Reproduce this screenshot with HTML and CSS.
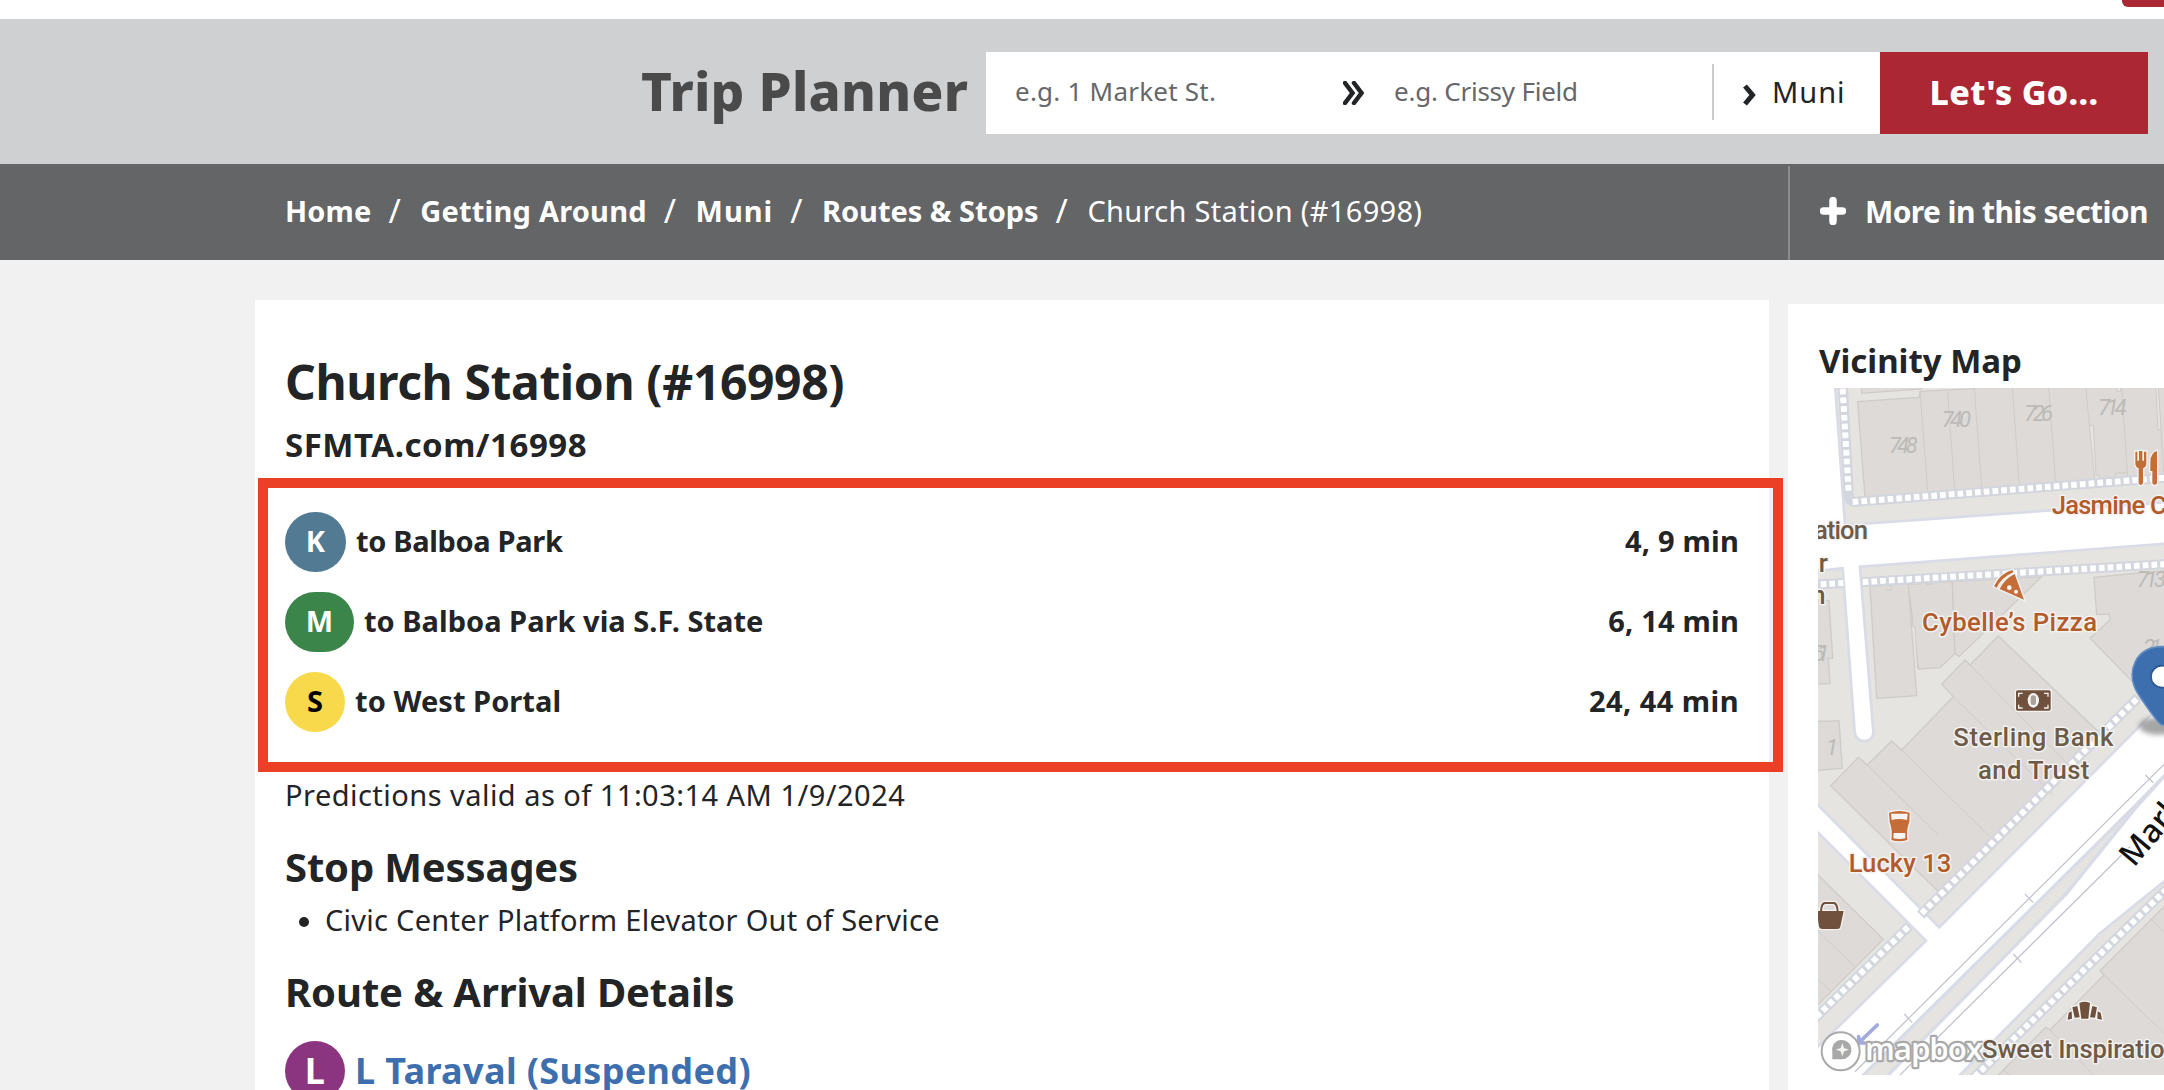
FILE: index.html
```
<!DOCTYPE html>
<html lang="en">
<head>
<meta charset="utf-8">
<title>Church Station (#16998)</title>
<link rel="stylesheet" href="styles.css">
</head>
<body>
<div class="topbar"><span class="topbar-tab"></span></div>
<header class="planner">
  <div class="planner-title">Trip Planner</div>
  <div class="planner-form">
    <span class="field from">e.g. 1 Market St.</span>
    <svg class="ico-double" viewBox="0 0 22 24"><path d="M2 2 L9.500 12 L2 22 M11 2 L18.500 12 L11 22" /></svg>
    <span class="field to">e.g. Crissy Field</span>
    <span class="mode"><svg class="ico-single" viewBox="0 0 14 22"><path d="M3 2 L10.500 11 L3 20" /></svg>Muni</span>
    <span class="go">Let's Go...</span>
  </div>
</header>
<nav class="crumbs">
  <div class="trail">
    <b class="c1">Home</b><i>/</i><b class="c2">Getting Around</b><i>/</i><b class="c3">Muni</b><i>/</i><b class="c4">Routes &amp; Stops</b><i>/</i><span>Church Station (#16998)</span>
  </div>
  <div class="more"><svg class="ico-plus" viewBox="0 0 26 28"><path d="M13 3.500 V24.500 M3.500 14 H22.500"/></svg>More in this section</div>
</nav>
<main class="page">
  <article class="stop">
    <h1>Church Station (#16998)</h1>
    <div class="short-url">SFMTA.com/16998</div>
    <section class="arrivals">
      <div class="row"><span class="badge k">K</span><span class="dest d1">to Balboa Park</span><span class="time t1">4, 9 min</span></div>
      <div class="row"><span class="badge m">M</span><span class="dest d2">to Balboa Park via S.F. State</span><span class="time t2">6, 14 min</span></div>
      <div class="row"><span class="badge s">S</span><span class="dest d3">to West Portal</span><span class="time t3">24, 44 min</span></div>
    </section>
    <p class="valid">Predictions valid as of 11:03:14 AM 1/9/2024</p>
    <h2 class="messages">Stop Messages</h2>
    <div class="message"><span class="dot"></span>Civic Center Platform Elevator Out of Service</div>
    <h2 class="details">Route &amp; Arrival Details</h2>
    <div class="route"><span class="badge l">L</span><span class="route-name">L Taraval (Suspended)</span></div>
  </article>
  <aside class="vicinity">
    <h3>Vicinity Map</h3>
    <svg class="map" viewBox="114 294 1038 2061">
      <defs><filter id="soft" x="-50%" y="-50%" width="200%" height="200%"><feGaussianBlur stdDeviation="8"/></filter></defs>
      <rect class="land" x="114" y="294" width="1038" height="2061"/>
      <!-- buildings -->
      <g class="bld">
        <path d="M245 280 H424 V297 L245 310Z"/>
        <path d="M233 335 L418 322 L420 304 L583 296 L583 280 H1170 V560 L255 622Z"/>
        <path d="M270 890 L385 880 L410 1217 L290 1225Z"/>
        <path d="M385 883 L517 875 L525 1090 L480 1133 L415 1137Z"/>
        <path d="M517 875 L785 860 L537 1100 L525 1090Z"/>
        <path d="M655 1038 L960 1330 L475 1805 L152 1487 L235 1402 L262 1425 L335 1353 L365 1380 L520 1220 L485 1183 L555 1110 L570 1125Z"/>
        <path d="M942 862 L1015 855 L1170 840 V1290 L930 1045 L990 990 L988 973 L950 973Z"/>
        <path d="M100 930 L147 932 L158 1105 L145 1105 L150 1180 L100 1183Z"/>
        <path d="M100 1295 L177 1292 L187 1435 L100 1442Z"/>
        <path d="M100 1741 L310 1948 L100 2158Z"/>
        <path d="M1170 1832 L960 2042 L972 2055 L810 2220 L797 2212 L640 2370 H1170Z"/>
      </g>
      <g class="split">
        <path d="M420 303 L443 603 M503 305 L524 600 M583 295 L605 592 M697 294 L718 585 M806 294 L827 577 M918 294 L928 407 M1025 294 L1043 562 M1134 294 L1152 560 M1005 550 L1040 548 M1005 565 V550 M318 893 V900 H334 V890 M438 883 L458 882"/>
        <path d="M570 1125 L880 1440 M520 1220 L820 1515 M365 1380 L640 1650 M262 1425 L475 1635 M114 1923 L222 2028 M114 2068 L152 2103 M972 2055 L1152 2230 M1110 1885 L1152 1927 M810 2220 L940 2355 M670 2340 L690 2355"/>
      </g>
      <path class="gap" d="M928 407 H940 L948 555 L958 558 L958 568 L944 568Z M1127 280 H1134 L1143 420 H1134Z M1008 280 L1012 305 L1022 303 L1020 280Z M397 1010 H405 L413 1135"/>
      <!-- roads -->
      <g class="road">
        <path d="M100 280 H165 L195 705 L1170 636 V760 L240 830 L280 1325 C282 1362 226 1364 224 1325 L188 835 L100 844Z"/>
        <path d="M1170 1217 L478 1912 L100 1531 V1614 L438 1952 L100 2284 V2370 H525 L960 1930 L1170 1760Z"/>
      </g>
      <path class="median" d="M1170 1440 L1065 1548 L235 2370 H310 L860 1810 L1065 1556 Z"/>
      <g class="walk-edge">
        <path d="M188 280 L207 620 Q208 637 228 635 L1160 563 M100 884 L190 879 M244 877 L1160 822 M1075 1222 L422 1875 M388 1908 L100 2190 M1160 1797 L580 2365"/>
      </g>
      <g class="walk">
        <path d="M188 296 L206 610 M218 636 L1160 563 M122 883 L190 879 M248 876 L1160 822 M1070 1227 L422 1873 M384 1911 L100 2190 M1160 1797 L580 2365"/>
      </g>
      <g class="rail"><path d="M1160 1415 L225 2345 M1050 1670 L350 2365"/><path d="M735 1812 L759 1838 M700 1992 L724 2018 M373 2172 L397 2198 M1096 1455 L1120 1478"/></g>
      <path class="arrow" d="M292 2205 L243 2252 M236 2240 V2259 H254"/>
      <!-- house numbers -->
      <g class="num">
        <text x="327" y="490" textLength="86">748</text><text x="485" y="412" textLength="88">740</text>
        <text x="733" y="393" textLength="86">726</text><text x="955" y="375" textLength="85">714</text>
        <text x="1070" y="890" textLength="88">713</text><text x="1090" y="1095" textLength="56">21</text>
        <text x="98" y="1114" textLength="50">51</text><text x="138" y="1395">1</text>
      </g>
      <!-- places -->
      <g class="poi food">
        <text x="815" y="672" textLength="345">Jasmine C</text>
        <text x="426" y="1023" textLength="525">Cybelle’s Pizza</text>
        <text x="206" y="1745" textLength="308">Lucky 13</text>
      </g>
      <g class="poi">
        <text x="102" y="747" textLength="162">ation</text><text x="116" y="847">r</text><text x="94" y="943">n</text>
        <text x="520" y="1368" textLength="480">Sterling Bank</text>
        <text x="594" y="1467" textLength="334">and Trust</text>
      </g>
      <text class="street" transform="translate(1062 1734) rotate(-50)">Mark</text>
      <g class="icon food-icon">
        <path d="M1066 485 H1072 V512 H1077 V483 H1087 V512 H1092 V485 H1099 V520 Q1099 532 1089 535 V580 Q1082 590 1076 580 V535 Q1066 532 1066 520Z M1131 483 V580 Q1124 589 1117 580 V543 H1111 V515 Q1112 488 1131 483Z"/>
        <path d="M642 889 Q660 850 697 840 L700 847 Q665 862 650 893Z M704 852 L732 929 L659 897 Q673 867 704 852Z"/>
        <path d="M327 1568 Q357 1558 389 1568 L388 1596 Q378 1620 382 1650 Q358 1658 334 1650 Q338 1620 329 1596Z"/>
      </g>
      <g class="hole"><circle cx="688" cy="893" r="7"/><circle cx="708" cy="905" r="6"/><path d="M333 1571 H383 L381 1590 Q357 1584 335 1590Z M341 1629 H376 V1645 Q358 1649 340 1645Z"/></g>
      <g class="icon">
        <rect x="708" y="1201" width="104" height="61" rx="5"/>
        <path fill-rule="evenodd" d="M100 1863 H120 Q122 1836 134 1836 H162 Q174 1836 176 1863 H191 L181 1910 Q180 1917 172 1917 H127 Q119 1917 117 1910 L110 1863Z M126 1863 H170 Q168 1842 160 1842 H136 Q128 1842 126 1863Z"/>
        <path d="M898 2139 Q914 2132 930 2139 L925 2186 H904Z M877 2152 L892 2148 L899 2182 L884 2183Z M937 2148 L951 2152 L945 2183 L930 2182Z M866 2168 L875 2164 L876 2186 L863 2189Z M953 2164 L962 2168 L966 2189 L952 2186Z"/>
      </g>
      <path class="bill" d="M716 1220 V1210 H728 M792 1210 H804 V1220 M804 1244 V1254 H792 M728 1254 H716 V1244"/>
      <ellipse class="hole" cx="760" cy="1231" rx="17" ry="22"/><rect class="bill-core" x="752" y="1216" width="16" height="29" rx="7"/>
      <!-- stop pin -->
      <ellipse class="shade" cx="1135" cy="1308" rx="58" ry="26" filter="url(#soft)"/>
      <path class="pin" d="M1146 1305 Q1132 1300 1072 1208 C1035 1145 1068 1070 1146 1070 H1170 V1305Z"/>
      <circle class="pin-hole" cx="1146" cy="1160" r="33"/>
      <!-- attribution -->
      <circle class="mb-ring" cx="182" cy="2284" r="57"/>
      <path class="mb-mark" d="M157 2308 V2286 A29 29 0 1 1 185 2308Z"/>
      <path class="hole" d="M187 2259 L192 2274 L207 2279 L192 2284 L187 2299 L182 2284 L167 2279 L182 2274Z"/>
      <text class="mb-text" x="255" y="2310" textLength="354">mapbox</text>
      <g class="poi"><text x="606" y="2305" textLength="548">Sweet Inspiratio</text></g>
    </svg>
  </aside>
</main>
</body>
</html>
```
FILE: styles.css
```
* { box-sizing: border-box; }
body { margin: 0; height: 1090px; overflow: hidden; background: #f1f1f1; color: #232426; font: 400 29px "Noto Sans", sans-serif; white-space: nowrap; }
h1, h2, h3, p { margin: 0; }

.topbar { height: 19px; background: #fff; display: flex; justify-content: flex-end; }
.topbar-tab { width: 42px; height: 7px; background: #aa2733; border-bottom-left-radius: 6px; }

.planner { height: 145px; background: #cfd0d2; display: flex; justify-content: flex-end; align-items: flex-start; padding-right: 16px; }
.planner-title { width: 345px; margin-top: 40px; font-size: 53px; font-weight: 800; line-height: 64px; letter-spacing: .2px; color: #4a4a4a; }
.planner-form { width: 1162px; height: 82px; margin-top: 33px; background: #fff; display: flex; }
.field { color: #666769; font-size: 26px; line-height: 78px; }
.from { width: 357px; padding-left: 29px; letter-spacing: .23px; }
.to { width: 347px; padding-left: 29px; letter-spacing: -.23px; }
.ico-double { width: 22px; height: 24px; margin-top: 29px; }
.ico-double path { fill: none; stroke: #232426; stroke-width: 4.500; stroke-linecap: round; }
.mode { width: 168px; margin: 12px 0 14px; height: 56px; border-left: 2px solid #ccc; padding-left: 28px; display: flex; font-size: 29px; line-height: 56px; letter-spacing: .95px; }
.ico-single { width: 14px; height: 22px; margin: 20px 16px 0 0; }
.ico-single path { fill: none; stroke: #232426; stroke-width: 5; }
.go { width: 268px; background: #aa2733; color: #fff; text-align: center; font-size: 34px; font-weight: 800; line-height: 80px; letter-spacing: .28px; }

.crumbs { height: 96px; background: #646567; color: #fff; display: flex; justify-content: space-between; padding-left: 285px; }
.trail { display: flex; line-height: 94px; }
.trail b { font-weight: 700; }
.trail i { font-style: normal; font-size: 33px; margin: 0 19.500px 0 17px; line-height: 93px; }
.trail span { letter-spacing: .32px; }
.c1 { letter-spacing: .14px; }
.c2 { letter-spacing: .22px; }
.c3 { letter-spacing: .98px; }
.c4 { letter-spacing: -.02px; }
.more { width: 376px; height: 94px; margin-top: 2px; border-left: 2px solid #8b8c8e; padding-left: 30px; display: flex; font-size: 30px; font-weight: 700; line-height: 91px; letter-spacing: -.6px; }
.ico-plus { width: 26px; height: 28px; margin: 31px 19px 0 0; }
.ico-plus path { fill: none; stroke: #fff; stroke-width: 7.500; stroke-linecap: round; }

.page { display: flex; align-items: flex-start; gap: 19px; padding-left: 255px; }
.stop { width: 1514px; height: 790px; margin-top: 40px; padding: 52px 0 0 30px; background: #fff; }
h1 { font-size: 48px; font-weight: 700; line-height: 60px; letter-spacing: -.38px; }
.short-url { margin-top: 10px; font-size: 33px; font-weight: 700; line-height: 46px; letter-spacing: .53px; }
.arrivals { position: relative; width: 1525px; height: 294px; margin: 10px 0 0 -27px; padding: 24px 34px 0 17px; border: 10px solid #eb4026; display: flex; flex-direction: column; gap: 20px; }
.row { display: flex; font-weight: 700; line-height: 58px; }
.badge { width: 61px; height: 60px; margin-right: 10px; border-radius: 30px; color: #fff; text-align: center; }
.k { background: #527a92; }
.m { width: 69px; background: #3b854b; }
.s { width: 60px; background: #f8d94b; color: #000; }
.l { width: 60px; background: #8b347f; font-size: 36px; }
.d1 { letter-spacing: -.33px; }
.d2 { letter-spacing: .02px; }
.d3 { letter-spacing: .05px; }
.time { margin-left: auto; }
.t1, .t2 { letter-spacing: .2px; }
.t3 { letter-spacing: .45px; }
.valid { margin-top: 2px; line-height: 41px; letter-spacing: .47px; }
h2 { font-size: 40px; font-weight: 700; line-height: 52px; }
.messages { margin-top: 26px; letter-spacing: -.16px; }
.message { display: flex; align-items: center; margin-top: 7px; line-height: 40px; letter-spacing: .27px; }
.dot { width: 10px; height: 10px; margin: 3px 16px 0 14px; border-radius: 50%; background: #232426; }
.details { margin-top: 26px; letter-spacing: -.12px; }
.route { display: flex; margin-top: 23px; color: #3d6eae; font-size: 36px; font-weight: 700; line-height: 60px; letter-spacing: .36px; }

.vicinity { width: 376px; height: 786px; margin-top: 44px; padding: 35px 0 0 31px; background: #fff; }
h3 { font-size: 33px; font-weight: 700; line-height: 44px; letter-spacing: -.01px; }
.map { display: block; width: 346px; height: 687px; margin: 5px 0 0 -1px; }
.land { fill: #e5e4e0; }
.bld { fill: #dddad7; stroke: #cfccc8; stroke-width: 4; }
.split { fill: none; stroke: #d0cdc9; stroke-width: 3; }
.gap { fill: #e5e4e0; stroke: #cfccc8; stroke-width: 3; }
.road { fill: #fff; stroke: #d9dbe7; stroke-width: 8; }
.median { fill: #e5e4e0; stroke: #d9dbe7; stroke-width: 10; }
.walk-edge { fill: none; stroke: #d4d6de; stroke-width: 30; }
.walk { fill: none; stroke: #fff; stroke-width: 18; stroke-dasharray: 17 9.300; }
.rail { fill: none; stroke: #c4c4d2; stroke-width: 4; }
.arrow { fill: none; stroke: #a2abdc; stroke-width: 11; stroke-linecap: round; }
.num { fill: #bcbab7; font: italic 400 66px Roboto, sans-serif; }
.poi, .street, .mb-text { paint-order: stroke; stroke-linejoin: round; }
.poi { fill: #6d5b49; stroke: #f4f3f1; stroke-width: 9; font: 500 77px Roboto, sans-serif; }
.food { fill: #b35b2a; }
.street { fill: #111; stroke: #fff; stroke-width: 8; font: 500 96px "Noto Sans", sans-serif; }
.icon { fill: #6f513d; stroke: #f4f3f1; stroke-width: 8; paint-order: stroke; }
.food-icon { fill: #c46d38; }
.hole { fill: #f6f4f2; }
.bill { fill: none; stroke: #f6f4f2; stroke-width: 4; }
.bill-core { fill: #aaa198; }
.shade { fill: #777; opacity: .65; }
.pin { fill: #3d6eae; stroke: #5f8cc2; stroke-width: 5; }
.pin-hole { fill: #fff; stroke: #2c578f; stroke-width: 5; }
.mb-ring { fill: #fff; stroke: #a9a9a9; stroke-width: 6; }
.mb-mark { fill: #a9a9a9; }
.mb-text { fill: #fff; stroke: #a9a9a9; stroke-width: 13; font: 600 94px "Open Sans", sans-serif; }
```
